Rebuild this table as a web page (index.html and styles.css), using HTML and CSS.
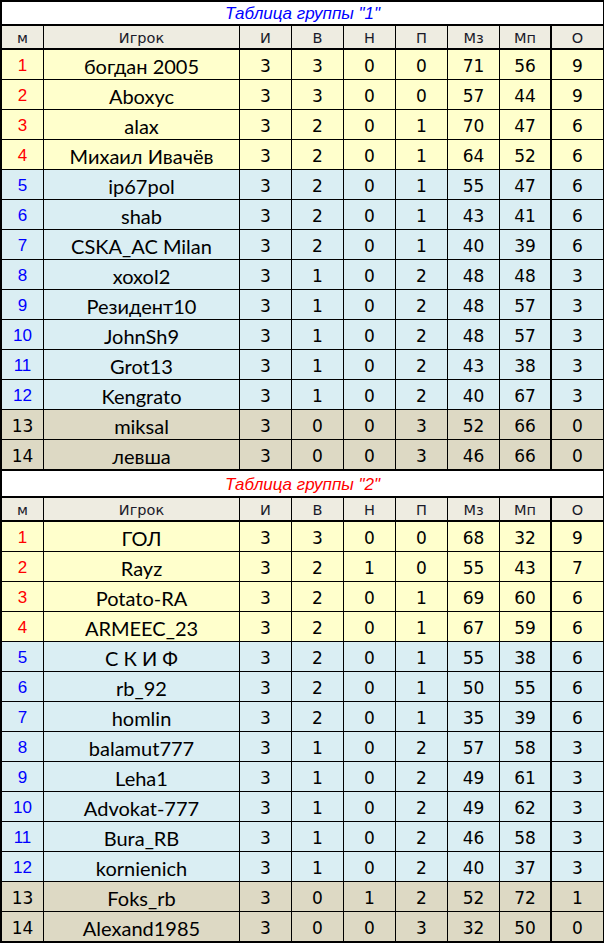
FILE: index.html
```html
<!DOCTYPE html>
<html lang="ru">
<head>
<meta charset="utf-8">
<title>Таблицы групп</title>
<link rel="stylesheet" href="styles.css">
</head>
<body>
<div class="sheet">
  <div class="title t-blue">Таблица группы "1"</div>
  <div class="row head"><div>м</div><div>Игрок</div><div>И</div><div>В</div><div>Н</div><div>П</div><div>Мз</div><div>Мп</div><div>О</div></div>
  <div class="row y"><div class="rk r">1</div><div class="nm">богдан 2005</div><div>3</div><div>3</div><div>0</div><div>0</div><div>71</div><div>56</div><div>9</div></div>
  <div class="row y"><div class="rk r">2</div><div class="nm">Aboxyc</div><div>3</div><div>3</div><div>0</div><div>0</div><div>57</div><div>44</div><div>9</div></div>
  <div class="row y"><div class="rk r">3</div><div class="nm">alax</div><div>3</div><div>2</div><div>0</div><div>1</div><div>70</div><div>47</div><div>6</div></div>
  <div class="row y"><div class="rk r">4</div><div class="nm">Михаил Ивачёв</div><div>3</div><div>2</div><div>0</div><div>1</div><div>64</div><div>52</div><div>6</div></div>
  <div class="row b"><div class="rk bl">5</div><div class="nm">ip67pol</div><div>3</div><div>2</div><div>0</div><div>1</div><div>55</div><div>47</div><div>6</div></div>
  <div class="row b"><div class="rk bl">6</div><div class="nm">shab</div><div>3</div><div>2</div><div>0</div><div>1</div><div>43</div><div>41</div><div>6</div></div>
  <div class="row b"><div class="rk bl">7</div><div class="nm">CSKA_AC Milan</div><div>3</div><div>2</div><div>0</div><div>1</div><div>40</div><div>39</div><div>6</div></div>
  <div class="row b"><div class="rk bl">8</div><div class="nm">xoxol2</div><div>3</div><div>1</div><div>0</div><div>2</div><div>48</div><div>48</div><div>3</div></div>
  <div class="row b"><div class="rk bl">9</div><div class="nm">Резидент10</div><div>3</div><div>1</div><div>0</div><div>2</div><div>48</div><div>57</div><div>3</div></div>
  <div class="row b"><div class="rk bl">10</div><div class="nm">JohnSh9</div><div>3</div><div>1</div><div>0</div><div>2</div><div>48</div><div>57</div><div>3</div></div>
  <div class="row b"><div class="rk bl">11</div><div class="nm">Grot13</div><div>3</div><div>1</div><div>0</div><div>2</div><div>43</div><div>38</div><div>3</div></div>
  <div class="row b"><div class="rk bl">12</div><div class="nm">Kengrato</div><div>3</div><div>1</div><div>0</div><div>2</div><div>40</div><div>67</div><div>3</div></div>
  <div class="row t"><div class="rk k">13</div><div class="nm">miksal</div><div>3</div><div>0</div><div>0</div><div>3</div><div>52</div><div>66</div><div>0</div></div>
  <div class="row t last"><div class="rk k">14</div><div class="nm">левша</div><div>3</div><div>0</div><div>0</div><div>3</div><div>46</div><div>66</div><div>0</div></div>

  <div class="title title2 t-red">Таблица группы "2"</div>
  <div class="row head"><div>м</div><div>Игрок</div><div>И</div><div>В</div><div>Н</div><div>П</div><div>Мз</div><div>Мп</div><div>О</div></div>
  <div class="row y"><div class="rk r">1</div><div class="nm">ГОЛ</div><div>3</div><div>3</div><div>0</div><div>0</div><div>68</div><div>32</div><div>9</div></div>
  <div class="row y"><div class="rk r">2</div><div class="nm">Rayz</div><div>3</div><div>2</div><div>1</div><div>0</div><div>55</div><div>43</div><div>7</div></div>
  <div class="row y"><div class="rk r">3</div><div class="nm">Potato-RA</div><div>3</div><div>2</div><div>0</div><div>1</div><div>69</div><div>60</div><div>6</div></div>
  <div class="row y"><div class="rk r">4</div><div class="nm">ARMEEC_23</div><div>3</div><div>2</div><div>0</div><div>1</div><div>67</div><div>59</div><div>6</div></div>
  <div class="row b"><div class="rk bl">5</div><div class="nm">С К И Ф</div><div>3</div><div>2</div><div>0</div><div>1</div><div>55</div><div>38</div><div>6</div></div>
  <div class="row b"><div class="rk bl">6</div><div class="nm">rb_92</div><div>3</div><div>2</div><div>0</div><div>1</div><div>50</div><div>55</div><div>6</div></div>
  <div class="row b"><div class="rk bl">7</div><div class="nm">homlin</div><div>3</div><div>2</div><div>0</div><div>1</div><div>35</div><div>39</div><div>6</div></div>
  <div class="row b"><div class="rk bl">8</div><div class="nm">balamut777</div><div>3</div><div>1</div><div>0</div><div>2</div><div>57</div><div>58</div><div>3</div></div>
  <div class="row b"><div class="rk bl">9</div><div class="nm">Leha1</div><div>3</div><div>1</div><div>0</div><div>2</div><div>49</div><div>61</div><div>3</div></div>
  <div class="row b"><div class="rk bl">10</div><div class="nm">Advokat-777</div><div>3</div><div>1</div><div>0</div><div>2</div><div>49</div><div>62</div><div>3</div></div>
  <div class="row b"><div class="rk bl">11</div><div class="nm">Bura_RB</div><div>3</div><div>1</div><div>0</div><div>2</div><div>46</div><div>58</div><div>3</div></div>
  <div class="row b"><div class="rk bl">12</div><div class="nm">kornienich</div><div>3</div><div>1</div><div>0</div><div>2</div><div>40</div><div>37</div><div>3</div></div>
  <div class="row t"><div class="rk k">13</div><div class="nm">Foks_rb</div><div>3</div><div>0</div><div>1</div><div>2</div><div>52</div><div>72</div><div>1</div></div>
  <div class="row t"><div class="rk k">14</div><div class="nm">Alexand1985</div><div>3</div><div>0</div><div>0</div><div>3</div><div>32</div><div>50</div><div>0</div></div>
</div>
</body>
</html>
```
FILE: styles.css
```css
html, body {
  margin: 0;
  padding: 0;
  background: #000;
}

.sheet {
  width: 604px;
  height: 943px;
  box-sizing: border-box;
  background: #000;
  padding: 2px 1px 2px 2px;
  display: flex;
  flex-direction: column;
  gap: 1px;
}

.title {
  height: 22px;
  margin-bottom: 1px;
  background: #fff;
  display: flex;
  align-items: center;
  justify-content: center;
  font-family: "Liberation Sans", Arial, sans-serif;
  font-style: italic;
  font-size: 17px;
  padding-top: 1px;
  box-sizing: border-box;
}

.title2 {
  height: 25px;
  padding-top: 2px;
}

.t-blue { color: #0000ff; }
.t-red { color: #ff0000; }

.row {
  display: grid;
  grid-template-columns: 41px 195px 51px 51px 51px 51px 51px 50px 52px;
  column-gap: 1px;
  height: 29px;
}

.row > div {
  display: flex;
  align-items: center;
  justify-content: center;
  font-family: "DejaVu Sans", Verdana, sans-serif;
  font-size: 17px;
  color: #000;
  padding-top: 2px;
  box-sizing: border-box;
}

.row > div:last-child {
  border-left: 1px solid #000;
}

.row.head {
  height: 22px;
  margin-bottom: 1px;
}

.row.head > div {
  background: #eeece1;
  font-size: 14.5px;
  color: #1a1a2a;
  padding-top: 1px;
}

.row.last {
  margin-bottom: 1px;
}

.row.y > div { background: #ffffcc; }
.row.b > div { background: #daeef3; }
.row.t > div { background: #ddd9c4; }

.row > .nm {
  font-family: Lato, "Open Sans", sans-serif;
  font-size: 20px;
}

.row > .rk {
  font-family: "Liberation Sans", Arial, sans-serif;
  font-size: 17px;
}

.row > .rk.r { color: #ff0000; }
.row > .rk.bl { color: #0000ff; }
.row > .rk.k {
  color: #000;
  font-family: "DejaVu Sans", Verdana, sans-serif;
  font-size: 17px;
}
```
